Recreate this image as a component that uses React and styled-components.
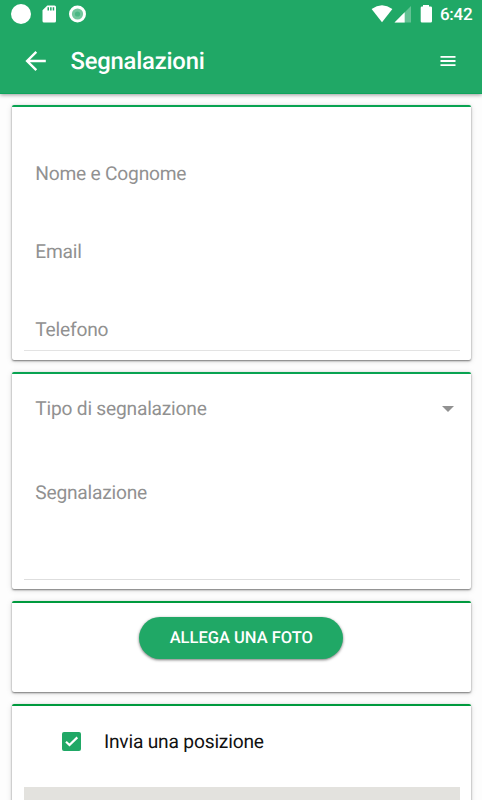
import React, { useState } from "react";

//Styling
import styled, { createGlobalStyle } from "styled-components";

const App = () => {
  const [sendPosition, setSendPosition] = useState(true);

  return (
    <>
      <GlobalStyle />
      <Page>
        <Header>
          <StatusBar>
            <StatusIcons />
            <StatusRight>
              <SignalIcons />
              <Clock>6:42</Clock>
            </StatusRight>
          </StatusBar>
          <Toolbar>
            <BackIcon />
            <Title>Segnalazioni</Title>
            <MenuIcon />
          </Toolbar>
        </Header>
        <Content>
          <Card $height={255}>
            <Fields>
              <Field>Nome e Cognome</Field>
              <Field>Email</Field>
              <Field $line>Telefono</Field>
            </Fields>
          </Card>
          <Card $height={217}>
            <Fields>
              <SelectField>
                <span>Tipo di segnalazione</span>
                <Caret />
              </SelectField>
              <TextArea>Segnalazione</TextArea>
            </Fields>
          </Card>
          <Card $height={91} $accent="#009a3e">
            <UploadButton>ALLEGA UNA FOTO</UploadButton>
          </Card>
          <Card $height={200} $accent="#009a3e">
            <CheckRow onClick={() => setSendPosition(!sendPosition)}>
              <CheckBox $checked={sendPosition}>
                <svg width="19" height="19" viewBox="0 0 19 19" fill="none">
                  <path d="M4 9.7L7.5 13L15.3 5.4" stroke="white" strokeWidth="2.2" />
                </svg>
              </CheckBox>
              <CheckLabel>Invia una posizione</CheckLabel>
            </CheckRow>
            <MapArea />
          </Card>
        </Content>
      </Page>
    </>
  );
};
export default App;

const StatusIcons = () => (
  <svg width="90" height="28" viewBox="0 0 90 28" fill="white">
    <circle cx="21" cy="14" r="10" />
    <path d="M47.3 5.5H54.5Q56 5.5 56 7V21Q56 22.5 54.5 22.5H44Q42.5 22.5 42.5 21V10.3Z" />
    <path d="M47.5 7.3H49V10.6H47.5ZM50.1 7.3H51.6V10.6H50.1ZM52.7 7.3H54.2V10.6H52.7Z" fill="#20a866" />
    <circle cx="77.5" cy="14" r="8.5" />
    <circle cx="77.5" cy="14" r="5.6" fill="#72c79d" />
    <circle cx="77.5" cy="14" r="2.6" fill="#4cb784" />
  </svg>
);

const SignalIcons = () => (
  <svg width="64" height="28" viewBox="370 0 64 28" fill="white">
    <path d="M371.6 8.9Q382 1.7 392.4 8.9L382 22.3Z" />
    <path d="M411 6V22.5H394.5Z" fillOpacity="0.3" />
    <path d="M404.7 12.3V22.5H394.5Z" />
    <path d="M423 5H429V6.5H430.7Q432 6.5 432 7.8V21.3Q432 22.5 430.7 22.5H422Q420.7 22.5 420.7 21.3V7.8Q420.7 6.5 422 6.5H423Z" />
  </svg>
);

const BackIcon = () => (
  <svg width="22" height="22" viewBox="0 0 22 22" fill="none" stroke="white" strokeWidth="2.4">
    <path d="M20.8 11H2.5M11.3 1.8L2.1 11L11.3 20.2" />
  </svg>
);

const MenuIcon = () => (
  <svg width="16" height="12" viewBox="0 0 16 12" fill="white">
    <path d="M0.5 1H15.5V2.8H0.5ZM0.5 5.1H15.5V6.9H0.5ZM0.5 9.2H15.5V11H0.5Z" />
  </svg>
);

const Caret = () => (
  <svg width="12" height="6" viewBox="0 0 12 6" fill="#919191">
    <path d="M0 0H12L6 6Z" />
  </svg>
);

const GlobalStyle = createGlobalStyle`
  * {
    box-sizing: border-box;
  }
  body {
    margin: 0;
    background-color: #fdfdfd;
    font-family: Roboto, "Liberation Sans", sans-serif;
    text-rendering: geometricPrecision;
  }
`;

const Page = styled.div`
  height: 800px;
  overflow: hidden;
`;

const Header = styled.header`
  position: relative;
  height: 94px;
  background-color: #20a866;
  border-bottom: 1px solid #0fa45c;
  box-shadow: 0 1px 4px rgba(0, 0, 0, 0.4);
  color: white;
`;

const StatusBar = styled.div`
  display: flex;
  justify-content: space-between;
  height: 28px;
`;

const StatusRight = styled.div`
  display: flex;
  width: 112px;
  gap: 6px;
`;

const Clock = styled.span`
  font-size: 17px;
  font-weight: 500;
  line-height: 30px;
  letter-spacing: -0.3px;
`;

const Toolbar = styled.div`
  display: flex;
  align-items: center;
  height: 66px;
  padding: 0 26px 0 25px;
`;

const Title = styled.h1`
  flex: 1;
  margin: 0 0 0 23.5px;
  font-size: 23.8px;
  font-weight: 500;
  letter-spacing: -0.2px;
`;

const Content = styled.main`
  display: flex;
  flex-direction: column;
  gap: 12px;
  padding: 11px 11px 0 12px;
`;

const Card = styled.section`
  flex-shrink: 0;
  height: ${(props) => props.$height}px;
  background-color: white;
  border-top: 2px solid ${(props) => props.$accent || "#08a351"};
  border-radius: 2px;
  box-shadow: 0 1px 2px rgba(0, 0, 0, 0.5), 0 1px 6px rgba(0, 0, 0, 0.13);
`;

const Fields = styled.div`
  padding: 0 11px 0 12px;
  color: #919191;
  font-size: 19.2px;
  line-height: 22px;
  letter-spacing: -0.22px;
`;

const Field = styled.div`
  height: 78px;
  padding: 56px 11.3px 0;
  border-bottom: 1px solid ${(props) => (props.$line ? "#e3e3e3" : "transparent")};
  &:last-child {
    height: 88px;
  }
`;

const SelectField = styled.div`
  display: flex;
  align-items: center;
  justify-content: space-between;
  height: 69px;
  padding: 0 6.5px 0 11.3px;
`;

const TextArea = styled.div`
  height: 137px;
  padding: 39px 11.3px 0;
  border-bottom: 1px solid #dedede;
`;

const UploadButton = styled.button`
  display: block;
  width: 204px;
  height: 42px;
  margin: 14px auto 0 127.3px;
  padding: 1px 0 0;
  border: none;
  border-radius: 21px;
  background-color: #20a866;
  box-shadow: 0 1px 3px rgba(0, 0, 0, 0.55);
  color: white;
  font-family: inherit;
  font-size: 16.5px;
  font-weight: 500;
  text-rendering: inherit;
  cursor: pointer;
`;

const CheckRow = styled.div`
  display: flex;
  align-items: center;
  height: 71px;
  padding-left: 50px;
  cursor: pointer;
`;

const CheckBox = styled.span`
  width: 19px;
  height: 19px;
  border-radius: 2px;
  background-color: ${(props) => (props.$checked ? "#20a866" : "#919191")};
  svg {
    display: block;
  }
`;

const CheckLabel = styled.span`
  margin-left: 22.9px;
  color: #111111;
  font-size: 19.2px;
  letter-spacing: -0.19px;
`;

const MapArea = styled.div`
  height: 110px;
  margin: 10px 11px 0 12px;
  background-color: #e3e2de;
`;
